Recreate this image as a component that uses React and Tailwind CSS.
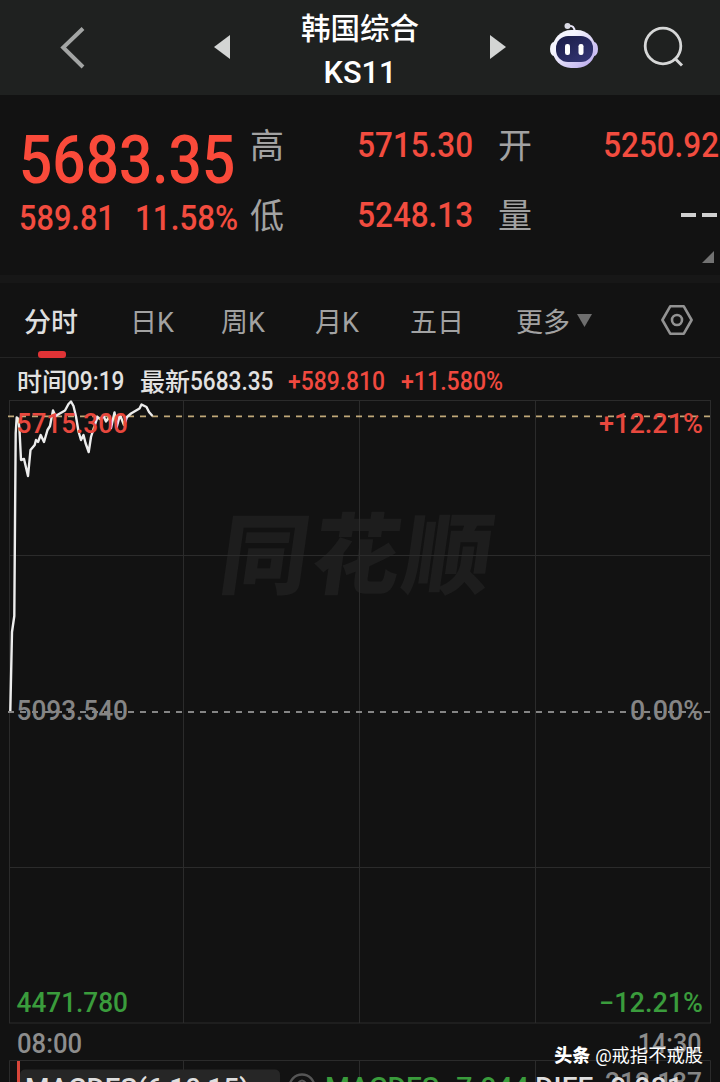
import React from 'react';

const tabs = ['分时', '日K', '周K', '月K', '五日'];

const trend =
  'M10.3 711 L12 632 L14.3 616 L15 523 L15.7 433 L16.7 417.5 L18.5 419 L19.5 430 L21 460 L24 459 L28 476 L30.5 450 L34.7 445 L36 440 L38 442 L40.7 435 L44 442 L47.5 430 L50 426 L53 410.5 L55.5 416 L65 410.5 L68.5 404 L71 401.5 L73.5 406 L76 416.5 L78.5 431.5 L81 440 L83.5 435 L85.5 443 L88.7 452 L91 437 L93.5 429 L97.5 417 L100 419 L103.5 416 L106 421.5 L109.5 416.5 L111 428 L114.5 412.5 L116.7 427 L120 415 L124 425 L127 417 L131 413.5 L139.5 408.5 L141.5 404.5 L146.5 407 L149 412 L152.5 416';

const Header = () => (
  <div className="h-[95px] shrink-0 bg-[#1f2120] flex items-center pl-[60px]">
    <svg className="w-[25px] h-[42px] shrink-0" viewBox="0 0 25 42" fill="none" stroke="#a3a5a4" strokeWidth="4">
      <path d="M23 1.5 L3.2 20.5 L23 40" strokeLinejoin="miter" />
    </svg>
    <svg className="w-4 h-6 ml-[129px] mb-[2px] shrink-0" viewBox="0 0 16 24">
      <path d="M0 12 L16 0 V24 Z" fill="#d3d5d4" />
    </svg>
    <div className="w-[120px] ml-[70px] pt-[4px] shrink-0 flex flex-col items-center text-white font-medium">
      <div className="text-[29.5px] leading-[44px] pt-px whitespace-nowrap">韩国综合</div>
      <div className="text-[32px] leading-[43px] scale-x-[0.96]">KS11</div>
    </div>
    <svg className="w-4 h-6 ml-[70px] mb-[2px] shrink-0" viewBox="0 0 16 24">
      <path d="M16 12 L0 0 V24 Z" fill="#d3d5d4" />
    </svg>
    <svg className="w-12 h-[46px] ml-[44px] mb-[5px] shrink-0" viewBox="0 0 48 46">
      <defs>
        <linearGradient id="shell" x1="0" y1="0" x2="1" y2="1">
          <stop offset="0.3" stopColor="#f4f4fd" />
          <stop offset="1" stopColor="#b5a4ec" />
        </linearGradient>
        <linearGradient id="visor" x1="0" y1="0" x2="1" y2="1">
          <stop offset="0" stopColor="#191b45" />
          <stop offset="1" stopColor="#363878" />
        </linearGradient>
      </defs>
      <path d="M18 4 Q25 3 24.5 10" fill="none" stroke="#e8e6f8" strokeWidth="2" />
      <circle cx="17.5" cy="4" r="3" fill="#dadbe5" />
      <ellipse cx="4" cy="27" rx="4" ry="7" fill="#f4f4fc" />
      <ellipse cx="44" cy="27" rx="4" ry="7" fill="#cfc3f5" />
      <rect x="2.5" y="8" width="43" height="38" rx="18.5" fill="url(#shell)" />
      <rect x="6" y="14" width="37" height="26" rx="12" fill="url(#visor)" />
      <rect x="15" y="22" width="5" height="11" rx="2.2" fill="#fff" />
      <rect x="28.5" y="22" width="5" height="11" rx="2.2" fill="#fff" />
    </svg>
    <svg className="w-[42px] h-[42px] ml-[45px] mb-[2px] shrink-0" viewBox="0 0 42 42" fill="none" stroke="#d6d7d7" strokeWidth="2.8">
      <circle cx="20" cy="20" r="17.8" />
      <path d="M31.5 32 L39 39.5" strokeWidth="3" />
    </svg>
  </div>
);

const Label = ({ children }) => (
  <div className="pt-[2px] text-[34px] leading-[68px] text-[#a2a2a2]">{children}</div>
);

const Value = ({ children }) => (
  <div className="text-right text-[34.5px] leading-[70px] text-[#f24c3f] font-medium origin-right scale-x-[0.91]">
    {children}
  </div>
);

const Quote = () => (
  <div className="h-[180px] shrink-0 flex">
    <div className="w-[250px] shrink-0 pl-[19px] text-[#fa4a3a]">
      <div className="mt-[30px] h-[70px] text-[67px] leading-[70px] font-medium whitespace-nowrap origin-left scale-x-[0.875]">
        5683.35
      </div>
      <div className="h-[47px] flex items-center text-[34.5px] leading-[47px] text-[#f24c3f] font-medium">
        <div className="w-[116px] origin-left scale-x-[0.89]">589.81</div>
        <div className="w-[115px] origin-left scale-x-[0.91]">11.58%</div>
      </div>
    </div>
    <div className="w-[470px] shrink-0">
      <div className="mt-[15px] grid grid-cols-[34px_189px_25px_34px_187px]">
        <Label>高</Label>
        <Value>5715.30</Value>
        <span />
        <Label>开</Label>
        <Value>5250.92</Value>
        <Label>低</Label>
        <Value>5248.13</Value>
        <span />
        <Label>量</Label>
        <div className="flex items-center justify-end gap-[6px] pr-[2px]">
          <span className="w-[15px] h-[4px] bg-[#cfcfcf]" />
          <span className="w-[15px] h-[4px] bg-[#cfcfcf]" />
        </div>
      </div>
      <svg className="w-3 h-3 ml-[452px] mt-px" viewBox="0 0 12 12">
        <path d="M12 0 V12 H0 Z" fill="#727272" />
      </svg>
    </div>
  </div>
);

const Tabs = () => (
  <div className="h-[75px] shrink-0 border-b border-[#242424] pl-[24px] grid grid-cols-[106px_91px_94px_95px_106px_145px_32px] text-[27px] leading-[80px] text-[#a2a2a2]">
    {tabs.map((t, i) => (
      <div key={t} className={i === 0 ? 'relative h-[75px] text-[#dedede] font-medium' : 'h-[75px]'}>
        {t}
        {i === 0 && <span className="absolute left-[14px] bottom-0 w-7 h-[7px] rounded-[3px] bg-[#e03336]" />}
      </div>
    ))}
    <div className="h-[75px] flex">
      更多
      <svg className="w-[15px] h-[13px] ml-[7px] mt-[31px]" viewBox="0 0 15 13">
        <path d="M0 0 H15 L7.5 13 Z" fill="#6e6e6e" />
      </svg>
    </div>
    <svg className="w-8 h-[30px] mt-[22px]" viewBox="0 0 32 30" fill="none" stroke="#929292" strokeWidth="2.6">
      <path d="M9.2 1.3 H22.8 L30.6 15 L22.8 28.7 H9.2 L1.4 15 Z" strokeLinejoin="round" />
      <circle cx="16" cy="15" r="5" />
    </svg>
  </div>
);

const Info = () => (
  <div className="h-[42px] shrink-0 flex items-center pl-[17px] pt-[5px] text-[25px] text-[#e2e2e2] font-medium whitespace-nowrap">
    <div className="w-[50px] pt-[2px]">时间</div>
    <div className="w-[73px] text-[26px] origin-left scale-x-[0.87]">09:19</div>
    <div className="w-[50px] pt-[2px]">最新</div>
    <div className="w-[98px] text-[26px] origin-left scale-x-[0.87]">5683.35</div>
    <div className="w-[113px] text-[26px] text-[#f0493f] origin-left scale-x-[0.88]">+589.810</div>
    <div className="w-[113px] text-[26px] text-[#f0493f] origin-left scale-x-[0.89]">+11.580%</div>
  </div>
);

const Num = ({ x, y, w, fill, size = 27, weight = 500, children }) => (
  <text x={x} y={y} textLength={w} lengthAdjust="spacingAndGlyphs" fill={fill} fontSize={size} fontWeight={weight}>
    {children}
  </text>
);

const Chart = () => (
  <svg className="w-[720px] h-[624px] shrink-0 block" viewBox="0 400 720 624">
    <text
      transform="translate(217 587) skewX(-8)"
      fontSize="88"
      fontWeight="900"
      textLength="271"
      fill="#1d1d1d"
    >
      同花顺
    </text>
    <g stroke="#2b2b2b" strokeWidth="1" fill="none">
      <rect x="9.5" y="400.5" width="701" height="622.5" />
      <path d="M183.5 400 V1023 M359.5 400 V1023 M535.5 400 V1023 M9 555.5 H710 M9 867.5 H710" />
    </g>
    <path d="M8 416.3 H710" stroke="#c0a878" strokeWidth="1.8" strokeDasharray="6 6" />
    <path d="M8 712 H710" stroke="#858585" strokeWidth="1.8" strokeDasharray="6 6" />
    <path d={trend} fill="none" stroke="#ededed" strokeWidth="2.4" strokeLinejoin="round" />
    <Num x="16.5" y="432.5" w="111.5" fill="#e8483e">5715.300</Num>
    <Num x="599" y="432.5" w="104" fill="#e8483e">+12.21%</Num>
    <Num x="16.5" y="719.5" w="111.5" fill="#858585">5093.540</Num>
    <Num x="630" y="719.5" w="73" fill="#858585">0.00%</Num>
    <Num x="16.5" y="1012" w="111.5" fill="#3a9c3c">4471.780</Num>
    <Num x="599" y="1012" w="104" fill="#3a9c3c">−12.21%</Num>
  </svg>
);

const TimeAxis = () => (
  <div className="relative h-[36px] shrink-0 flex justify-between pl-[17px] pr-[18px] text-[27px] leading-[40px] text-[#8d8d8d] font-medium">
    <span className="origin-left scale-x-[0.95]">08:00</span>
    <span className="origin-right scale-x-[0.93]">14:30</span>
    <div className="absolute right-[17px] top-[19px] flex items-center gap-[5px] text-[18px] leading-[26px] text-white font-normal whitespace-nowrap z-10">
      <span className="font-black">头条</span>
      <span className="text-[18.3px]">@戒指不戒股</span>
    </div>
  </div>
);

const Macd = () => (
  <svg className="w-[720px] h-[22px] shrink-0 block" viewBox="0 1060 720 22">
    <path d="M9.5 1082 V1060.5 H710.5 V1082 M183.5 1060 V1082 M359.5 1060 V1082 M535.5 1060 V1082" fill="none" stroke="#2b2b2b" />
    <rect x="20" y="1069.5" width="260" height="30" rx="5" fill="#262626" />
    <path d="M18.5 1061 V1082" stroke="#d8463a" strokeWidth="3" />
    <Num x="25" y="1098" w="224" fill="#dedede">MACDFS(6,10,15)</Num>
    <circle cx="302" cy="1087" r="12.5" fill="none" stroke="#555" strokeWidth="2.4" />
    <path d="M297.5 1084 Q302 1077 306.5 1084" fill="none" stroke="#555" strokeWidth="2.2" />
    <Num x="325" y="1097" w="204" fill="#3a9c3c">MACDFS:-7.944</Num>
    <Num x="605" y="1092" w="97" fill="#858585">212.187</Num>
    <Num x="535" y="1097" w="148" fill="#dedede">DIFF:-9.981</Num>
  </svg>
);

const App = () => {
  return (
    <div className="w-[720px] h-[1082px] overflow-hidden bg-[#121212] flex flex-col font-[Roboto,'Noto_Sans_CJK_SC',sans-serif]">
      <Header />
      <Quote />
      <div className="h-2 shrink-0 bg-[#171717]" />
      <Tabs />
      <Info />
      <Chart />
      <TimeAxis />
      <Macd />
    </div>
  );
};

export default App;
